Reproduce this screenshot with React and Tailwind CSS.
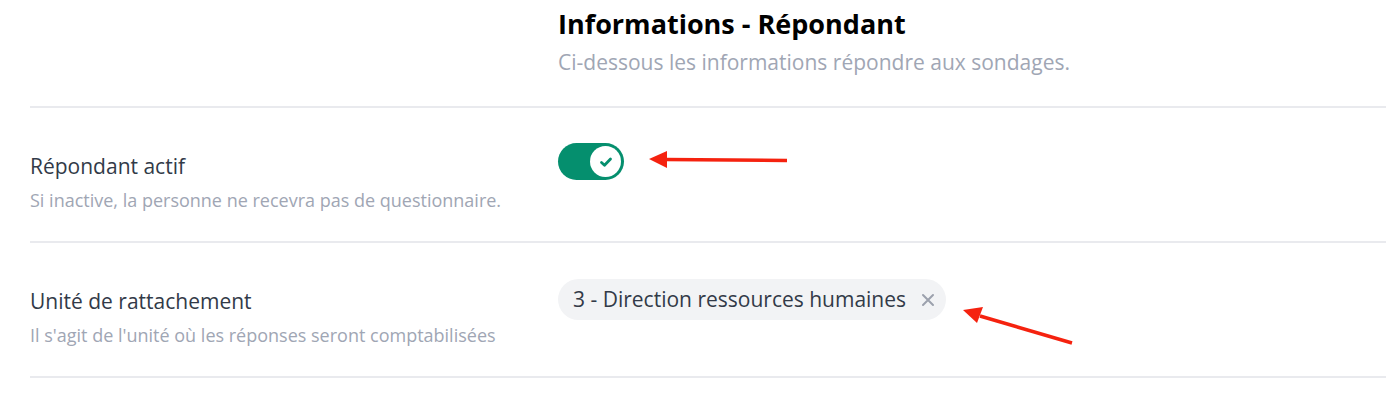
import React from "react";

export default function App() {
  return (
    <div className="relative w-[1386px] h-[404px] bg-white overflow-hidden" style={{ fontFamily: '"Open Sans", sans-serif' }}>
      <div className="pl-[30px]">
        <div className="grid grid-cols-[528px_1fr] pt-[6px] pb-[29px] border-b-2 border-[#e9eaee]">
          <div />
          <div>
            <h2 className="text-[27px] leading-[36px] font-bold text-black">Informations - Répondant</h2>
            <p className="text-[21px] leading-[30px] mt-[5px] text-[#a0a6b4]">Ci-dessous les informations répondre aux sondages.</p>
          </div>
        </div>

        <div className="grid grid-cols-[528px_1fr] border-b-2 border-[#e9eaee] h-[135px]">
          <div className="pt-[43px]">
            <div className="text-[21px] leading-[30px] text-[#323a48]">Répondant actif</div>
            <div className="text-[18px] leading-[26px] mt-[6px] text-[#a0a6b4]">Si inactive, la personne ne recevra pas de questionnaire.</div>
          </div>
          <div className="pt-[35px]">
            <div className="w-[66px] h-[37px] rounded-full bg-[#058f6e] flex items-center justify-end pr-[3px]">
              <div className="w-[31px] h-[31px] rounded-full bg-white flex items-center justify-center">
                <svg width="16" height="16" viewBox="0 0 16 16">
                  <path d="M3.5 8.5 L6.5 11.2 L12.5 5" fill="none" stroke="#058f6e" strokeWidth="2.8" strokeLinecap="round" strokeLinejoin="round" />
                </svg>
              </div>
            </div>
          </div>
        </div>

        <div className="grid grid-cols-[528px_1fr] border-b-2 border-[#e9eaee] h-[135px]">
          <div className="pt-[43px]">
            <div className="text-[21px] leading-[30px] text-[#323a48]">Unité de rattachement</div>
            <div className="text-[18px] leading-[26px] mt-[6px] text-[#a0a6b4]">Il s'agit de l'unité où les réponses seront comptabilisées</div>
          </div>
          <div className="pt-[36px]">
            <div className="inline-flex items-center h-[41px] rounded-full bg-[#f2f3f5] pl-[15px] pr-[11px]">
              <span className="text-[21px] text-[#323a48]">3 - Direction ressources humaines</span>
              <svg className="ml-[15px]" width="14" height="14" viewBox="0 0 14 14">
                <path d="M2 2 L12 12 M12 2 L2 12" stroke="#9ca1ad" strokeWidth="2" strokeLinecap="round" />
              </svg>
            </div>
          </div>
        </div>
      </div>

      <svg className="absolute left-0 top-0 pointer-events-none" width="1386" height="404">
        <line x1="787" y1="160.5" x2="665" y2="159.5" stroke="#f5220f" strokeWidth="3.5" />
        <polygon points="649,159 667,151 667,168" fill="#f5220f" />
        <line x1="1072" y1="343" x2="980" y2="316" stroke="#f5220f" strokeWidth="3.5" />
        <polygon points="963,310 983,307 977,323" fill="#f5220f" />
      </svg>
    </div>
  );
}
